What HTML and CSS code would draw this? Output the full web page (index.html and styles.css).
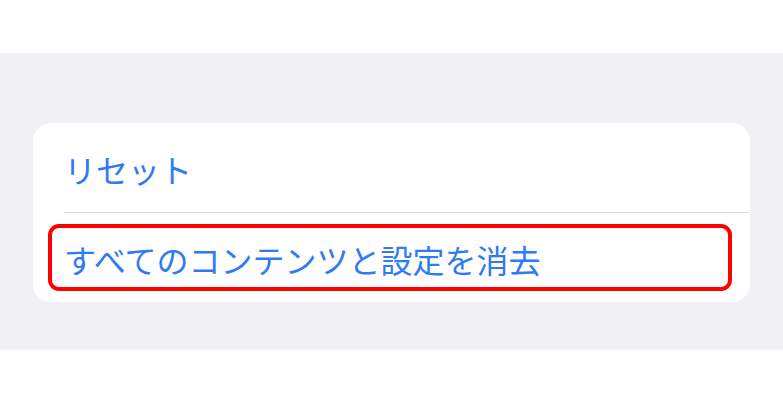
FILE: index.html
```html
<!DOCTYPE html>
<html lang="ja">

<head>
    <title>リセット</title>
    <meta charset="UTF-8">
    <meta name="viewport" content="width=device-width, initial-scale=1">
    <link rel="stylesheet" href="styles.css">
</head>

<body>
    <div class="top"></div>
    <div class="group">
        <div class="card">
            <div class="row">
                <span class="label">リセット</span>
            </div>
            <div class="row row-last">
                <span class="label">すべてのコンテンツと設定を消去</span>
                <div class="mark"></div>
            </div>
        </div>
    </div>
</body>

</html>
```

FILE: styles.css
```css
* {
    margin: 0;
    padding: 0;
    box-sizing: border-box;
}

body {
    background: #fff;
    font-family: "Noto Sans CJK JP", "Noto Sans", sans-serif;
}

.top {
    height: 53px;
}

.group {
    height: 297px;
    background: #f0f0f5;
    padding: 70px 33px 0 33px;
}

.card {
    width: 717px;
    background: #fff;
    border-radius: 18px;
}

.row {
    position: relative;
    height: 90px;
    margin-left: 31px;
    display: flex;
    align-items: center;
    border-bottom: 1px solid #dcdcdf;
}

.row-last {
    border-bottom: none;
    height: 89px;
}

.label {
    font-size: 32px;
    color: #2f7af5;
    line-height: 1;
    margin-top: 2px;
}

.mark {
    position: absolute;
    left: -16px;
    right: 18px;
    top: 11px;
    bottom: 11px;
    border: 4px solid #ff0000;
    border-radius: 11px;
}
```
